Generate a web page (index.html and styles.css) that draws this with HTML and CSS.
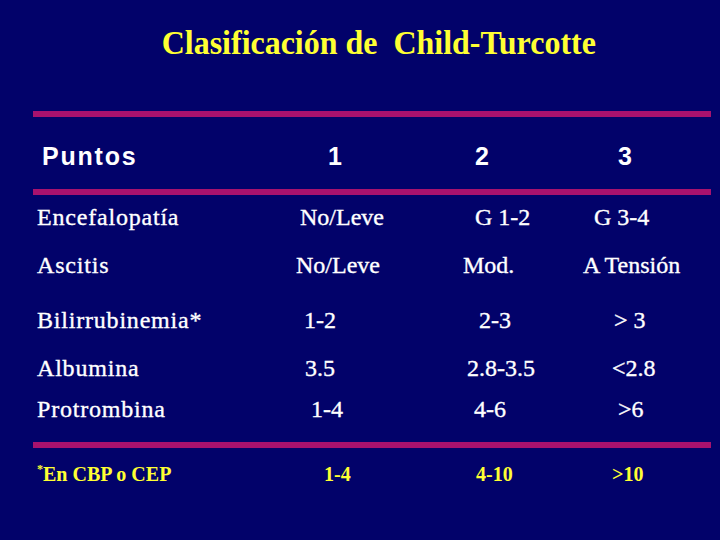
FILE: index.html
```html
<!DOCTYPE html>
<html lang="es">
<head>
<meta charset="utf-8">
<title>Clasificación de Child-Turcotte</title>
<link rel="stylesheet" href="styles.css">
</head>
<body>
<main class="slide">
  <h1 class="title">Clasificación de&nbsp; Child-Turcotte</h1>
  <div class="rule rule-top"></div>
  <div class="head row">
    <span class="head-label">Puntos</span>
    <span class="m38">1</span>
    <span class="m15">2</span>
    <span class="m43">3</span>
  </div>
  <div class="rule"></div>
  <div class="table">
    <span class="label">Encefalopatía</span>
    <span class="m10">No/Leve</span>
    <span class="m15">G 1-2</span>
    <span class="m19">G 3-4</span>

    <span class="label">Ascitis</span>
    <span class="m6">No/Leve</span>
    <span class="m3">Mod.</span>
    <span class="m8">A Tensión</span>

    <span class="label">Bilirrubinemia*</span>
    <span class="m14">1-2</span>
    <span class="m19">2-3</span>
    <span class="m39">&gt; 3</span>

    <span class="label">Albumina</span>
    <span class="m15">3.5</span>
    <span class="m7">2.8-3.5</span>
    <span class="m37">&lt;2.8</span>

    <span class="label">Protrombina</span>
    <span class="m21">1-4</span>
    <span class="m14">4-6</span>
    <span class="m43">&gt;6</span>
  </div>
  <div class="rule rule-bottom"></div>
  <div class="foot row">
    <span class="foot-label"><sup class="star">*</sup>En CBP o CEP</span>
    <span class="m34">1-4</span>
    <span class="m16">4-10</span>
    <span class="m37">&gt;10</span>
  </div>
</main>
</body>
</html>
```

FILE: styles.css
```css
html, body {
  margin: 0;
  padding: 0;
}

body {
  width: 720px;
  height: 540px;
  background: #02026a;
  overflow: hidden;
}

.slide {
  width: 720px;
  height: 540px;
  display: flex;
  flex-direction: column;
  font-family: "Liberation Serif", "Times New Roman", serif;
  color: #ffffff;
}

.title {
  margin: 0;
  padding: 27px 0 0 40px;
  height: 32px;
  line-height: 32px;
  font-size: 34px;
  font-weight: bold;
  text-align: center;
  color: #ffff33;
  white-space: pre;
  transform: scaleX(0.94);
}

.rule {
  margin-left: 33px;
  width: 678px;
  height: 6px;
  background: #a8126e;
  flex: none;
}

.rule-top {
  margin-top: 52px;
}

.rule-bottom {
  margin-top: 11px;
}

.row,
.table {
  display: grid;
  grid-template-columns: 253px 170px 115px 1fr;
  padding-left: 37px;
  align-items: center;
}

.head {
  height: 66px;
  padding-top: 6px;
  font-family: "Liberation Sans", Arial, sans-serif;
  font-weight: bold;
  font-size: 25px;
  letter-spacing: 1px;
}

.head-label {
  margin-left: 5px;
  letter-spacing: 1.8px;
}

.table {
  grid-template-rows: 44px 52px 58px 38px 44px;
  font-size: 24px;
  -webkit-text-stroke: 0.35px #ffffff;
}

.label {
  letter-spacing: 0.8px;
}

.foot {
  height: 52px;
  font-size: 20px;
  font-weight: bold;
  color: #ffff33;
}

.star {
  font-size: 12px;
  vertical-align: 8px;
  line-height: 0;
}

.m3 { margin-left: 3px; }
.m6 { margin-left: 6px; }
.m7 { margin-left: 7px; }
.m8 { margin-left: 8px; }
.m10 { margin-left: 10px; }
.m14 { margin-left: 14px; }
.m15 { margin-left: 15px; }
.m16 { margin-left: 16px; }
.m19 { margin-left: 19px; }
.m21 { margin-left: 21px; }
.m34 { margin-left: 34px; }
.m37 { margin-left: 37px; }
.m38 { margin-left: 38px; }
.m39 { margin-left: 39px; }
.m43 { margin-left: 43px; }
```
